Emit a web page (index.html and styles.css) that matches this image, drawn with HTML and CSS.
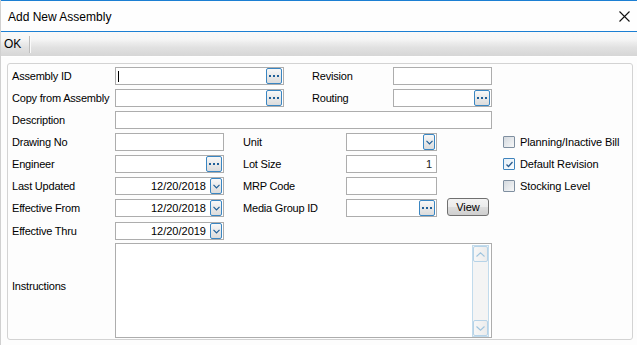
FILE: index.html
```html
<!DOCTYPE html>
<html>
<head>
<meta charset="utf-8">
<link rel="stylesheet" href="styles.css">
</head>
<body>
<div class="window">
  <div class="titlebar">
    <span class="title">Add New Assembly</span>
    <svg class="close" width="11" height="11" viewBox="0 0 11 11"><path d="M0.5 0.5 L10.5 10.5 M10.5 0.5 L0.5 10.5" stroke="#111" stroke-width="1.1" fill="none"/></svg>
  </div>
  <div class="toolbar">
    <span class="tb-btn">OK</span>
    <span class="tb-sep"></span>
  </div>
  <div class="content">
    <div class="group">
      <div class="top-grid">
        <span class="lbl">Assembly ID</span>
        <div class="field"><span class="caret"></span><span class="ell"><svg width="10" height="2" viewBox="0 0 10 2"><rect x="0" y="0" width="2" height="2"/><rect x="4" y="0" width="2" height="2"/><rect x="8" y="0" width="2" height="2"/></svg></span></div>
        <span class="lbl c4">Revision</span>
        <div class="field"></div>

        <span class="lbl">Copy from Assembly</span>
        <div class="field"><span class="ell"><svg width="10" height="2" viewBox="0 0 10 2"><rect x="0" y="0" width="2" height="2"/><rect x="4" y="0" width="2" height="2"/><rect x="8" y="0" width="2" height="2"/></svg></span></div>
        <span class="lbl c4">Routing</span>
        <div class="field"><span class="ell"><svg width="10" height="2" viewBox="0 0 10 2"><rect x="0" y="0" width="2" height="2"/><rect x="4" y="0" width="2" height="2"/><rect x="8" y="0" width="2" height="2"/></svg></span></div>

        <span class="lbl">Description</span>
        <div class="field span-desc"></div>
      </div>

      <div class="mid-grid">
        <span class="lbl r1 m1">Drawing No</span>
        <div class="field r1 m2"></div>
        <span class="lbl r1 m4">Unit</span>
        <div class="field r1 m5"><span class="dd"><svg width="7" height="5" viewBox="0 0 7 5"><path d="M0.5 0.8 L3.5 3.8 L6.5 0.8" stroke="#1f5f98" stroke-width="1.2" fill="none"/></svg></span></div>
        <label class="chk r1 m9"><span class="cb"></span>Planning/Inactive Bill</label>

        <span class="lbl r2 m1">Engineer</span>
        <div class="field r2 m2"><span class="ell"><svg width="10" height="2" viewBox="0 0 10 2"><rect x="0" y="0" width="2" height="2"/><rect x="4" y="0" width="2" height="2"/><rect x="8" y="0" width="2" height="2"/></svg></span></div>
        <span class="lbl r2 m4">Lot Size</span>
        <div class="field r2 m5 num">1</div>
        <label class="chk r2 m9"><span class="cb checked"><svg width="9" height="9" viewBox="0 0 9 9"><path d="M1.5 4.5 L3.5 6.5 L7.5 2" stroke="#2a5d90" stroke-width="1.3" fill="none"/></svg></span>Default Revision</label>

        <span class="lbl r3 m1">Last Updated</span>
        <div class="field r3 m2 date">12/20/2018<span class="dd"><svg width="7" height="5" viewBox="0 0 7 5"><path d="M0.5 0.8 L3.5 3.8 L6.5 0.8" stroke="#1f5f98" stroke-width="1.2" fill="none"/></svg></span></div>
        <span class="lbl r3 m4">MRP Code</span>
        <div class="field r3 m5"></div>
        <label class="chk r3 m9"><span class="cb"></span>Stocking Level</label>

        <span class="lbl r4 m1">Effective From</span>
        <div class="field r4 m2 date">12/20/2018<span class="dd"><svg width="7" height="5" viewBox="0 0 7 5"><path d="M0.5 0.8 L3.5 3.8 L6.5 0.8" stroke="#1f5f98" stroke-width="1.2" fill="none"/></svg></span></div>
        <span class="lbl r4 m4">Media Group ID</span>
        <div class="field r4 m5"><span class="ell"><svg width="10" height="2" viewBox="0 0 10 2"><rect x="0" y="0" width="2" height="2"/><rect x="4" y="0" width="2" height="2"/><rect x="8" y="0" width="2" height="2"/></svg></span></div>
        <span class="btn r4 m7">View</span>

        <span class="lbl r5 m1">Effective Thru</span>
        <div class="field r5 m2 date">12/20/2019<span class="dd"><svg width="7" height="5" viewBox="0 0 7 5"><path d="M0.5 0.8 L3.5 3.8 L6.5 0.8" stroke="#1f5f98" stroke-width="1.2" fill="none"/></svg></span></div>
      </div>

      <div class="instr-row">
        <span class="lbl instr-lbl">Instructions</span>
        <div class="memo">
          <div class="sb">
            <span class="sb-btn"><svg width="9" height="5" viewBox="0 0 9 5"><path d="M0.5 4.5 L4.5 0.8 L8.5 4.5" stroke="#9fc4de" stroke-width="1.1" fill="none"/></svg></span>
            <span class="sb-btn"><svg width="9" height="5" viewBox="0 0 9 5"><path d="M0.5 0.5 L4.5 4.2 L8.5 0.5" stroke="#9fc4de" stroke-width="1.1" fill="none"/></svg></span>
          </div>
        </div>
      </div>
    </div>
  </div>
</div>
</body>
</html>
```

FILE: styles.css
```css
* { box-sizing: border-box; }

body {
  margin: 0;
  background: #fdfdfd;
  font-family: "Liberation Sans", Arial, sans-serif;
  font-size: 11px;
  color: #000;
}

.window {
  width: 637px;
  height: 345px;
  overflow: hidden;
  background: #fdfdfd;
  border-left: 1px solid #d0d0d0;
}

.titlebar {
  height: 32px;
  border-top: 1px solid #1c7fd3;
  border-bottom: 1px solid #1c7fd3;
  background: #fefefe;
  display: flex;
  align-items: center;
  justify-content: space-between;
  padding: 0 7px 0 7px;
}

.title {
  font-size: 12px;
  padding-top: 1px;
}

.close { display: block; margin-top: 1px; }

.toolbar {
  height: 25px;
  background: linear-gradient(#f9f9f9 0%, #f6f6f6 30%, #ececec 45%, #e1e1e1 65%, #d6d6d6 100%);
  border-bottom: 1px solid #ffffff;
  display: flex;
  align-items: center;
  padding-left: 3px;
}

.tb-btn {
  width: 25px;
  font-size: 12px;
}

.tb-sep {
  width: 2px;
  height: 17px;
  border-left: 1px solid #bdbdbd;
  border-right: 1px solid #fafafa;
}

.content {
  padding: 6px 0 0 6px;
}

.group {
  width: 626px;
  border: 1px solid #d3d3d3;
  border-radius: 3px;
  padding: 3px 0 1px 4px;
  display: flex;
  flex-direction: column;
  gap: 4px;
  background: #fdfdfd;
}

.lbl {
  white-space: nowrap;
  align-self: center;
  letter-spacing: -0.2px;
}

.top-grid {
  display: grid;
  grid-template-columns: 103px 169px 28px 81px 99px;
  grid-auto-rows: 18px;
  row-gap: 4px;
}

.top-grid .c4 { grid-column: 4; }
.top-grid .span-desc { grid-column: 2 / 6; }

.mid-grid {
  display: grid;
  grid-template-columns: 103px 109px 19px 103px 91px 10px 42px 14px 1fr;
  grid-template-rows: repeat(5, 18px);
  row-gap: 4px;
}

.r1 { grid-row: 1; }
.r2 { grid-row: 2; }
.r3 { grid-row: 3; }
.r4 { grid-row: 4; }
.r5 { grid-row: 5; margin-top: 1px; }
.m1 { grid-column: 1; }
.m2 { grid-column: 2; }
.m4 { grid-column: 4; }
.m5 { grid-column: 5; }
.m7 { grid-column: 7; }
.m9 { grid-column: 9; }

.field {
  height: 18px;
  border: 1px solid #adadad;
  background: #fff;
  display: flex;
  align-items: center;
  justify-content: flex-end;
  padding-right: 1px;
}

.field.num {
  padding-right: 4px;
  color: #1a1a1a;
}

.field.date .dd { margin-left: 4px; }

.caret {
  width: 1px;
  height: 11px;
  background: #000;
  margin-left: 2px;
  margin-right: auto;
}

.ell {
  width: 16px;
  height: 16px;
  border: 1px solid #3a86c2;
  border-radius: 2px;
  background: linear-gradient(#f8f8f8, #e8e8e8 55%, #dcdcdc);
  display: flex;
  align-items: center;
  justify-content: center;
}

.ell svg { fill: #1f5f98; display: block; }

.dd {
  width: 12px;
  height: 16px;
  border: 1px solid #3a86c2;
  border-radius: 2px;
  background: linear-gradient(#f8f8f8, #e8e8e8 55%, #dcdcdc);
  display: flex;
  align-items: center;
  justify-content: center;
}

.dd svg { display: block; }

.chk {
  display: flex;
  align-items: center;
  gap: 5px;
  white-space: nowrap;
  align-self: center;
  letter-spacing: -0.1px;
}

.cb {
  width: 12px;
  height: 12px;
  border: 1px solid #7f8fa0;
  border-radius: 1px;
  background: linear-gradient(135deg, #d4d9df, #f6f7f8);
  display: flex;
  align-items: center;
  justify-content: center;
}

.cb.checked {
  border-color: #3f84bd;
  background: linear-gradient(135deg, #e4eef6, #fbfdff);
}

.cb svg { display: block; }

.btn {
  height: 18px;
  margin-top: -1px;
  border: 1px solid #707070;
  border-radius: 3px;
  background: linear-gradient(#f3f3f3, #ebebeb 50%, #dddddd 51%, #cfcfcf);
  display: flex;
  align-items: center;
  justify-content: center;
}

.instr-row {
  display: flex;
}

.instr-lbl {
  width: 103px;
  padding-bottom: 9px;
}

.memo {
  width: 377px;
  height: 95px;
  border: 1px solid #adadad;
  background: #fff;
  display: flex;
  justify-content: flex-end;
  padding: 1px 2px 0 0;
}

.sb {
  width: 17px;
  height: 92px;
  border: 1px solid #c2dbec;
  background: #f4f4f4;
  display: flex;
  flex-direction: column;
  justify-content: space-between;
}

.sb-btn {
  height: 16px;
  border: 1px solid #b6d3e8;
  border-radius: 2px;
  background: linear-gradient(90deg, #f7f7f7, #ececec);
  display: flex;
  align-items: center;
  justify-content: center;
}

.sb-btn svg { display: block; }
```
